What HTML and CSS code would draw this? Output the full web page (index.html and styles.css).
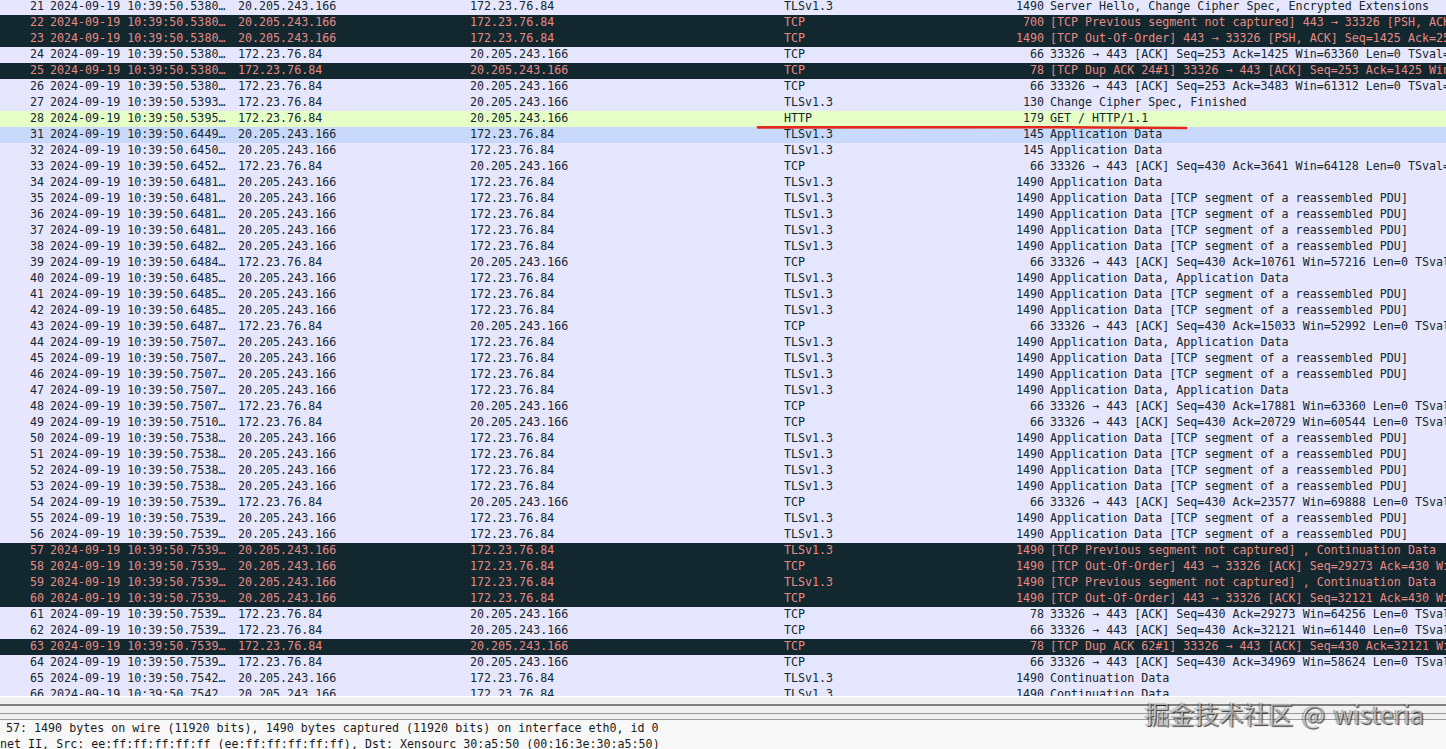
FILE: index.html
```html
<!DOCTYPE html>
<html lang="en">
<head>
<meta charset="utf-8">
<title>Packet capture</title>
<link rel="stylesheet" href="styles.css">
</head>
<body>
<main class="app">
<section class="packets">
<div class="row"><span class="no">21</span><span class="time">2024-09-19 10:39:50.5380…</span><span class="src">20.205.243.166</span><span class="dst">172.23.76.84</span><span class="proto">TLSv1.3</span><span class="len">1490</span><span class="info">Server Hello, Change Cipher Spec, Encrypted Extensions</span></div>
<div class="row bad"><span class="no">22</span><span class="time">2024-09-19 10:39:50.5380…</span><span class="src">20.205.243.166</span><span class="dst">172.23.76.84</span><span class="proto">TCP</span><span class="len">700</span><span class="info">[TCP Previous segment not captured] 443 → 33326 [PSH, ACK] Seq=253</span></div>
<div class="row bad"><span class="no">23</span><span class="time">2024-09-19 10:39:50.5380…</span><span class="src">20.205.243.166</span><span class="dst">172.23.76.84</span><span class="proto">TCP</span><span class="len">1490</span><span class="info">[TCP Out-Of-Order] 443 → 33326 [PSH, ACK] Seq=1425 Ack=253 Win=64</span></div>
<div class="row"><span class="no">24</span><span class="time">2024-09-19 10:39:50.5380…</span><span class="src">172.23.76.84</span><span class="dst">20.205.243.166</span><span class="proto">TCP</span><span class="len">66</span><span class="info">33326 → 443 [ACK] Seq=253 Ack=1425 Win=63360 Len=0 TSval=3</span></div>
<div class="row bad"><span class="no">25</span><span class="time">2024-09-19 10:39:50.5380…</span><span class="src">172.23.76.84</span><span class="dst">20.205.243.166</span><span class="proto">TCP</span><span class="len">78</span><span class="info">[TCP Dup ACK 24#1] 33326 → 443 [ACK] Seq=253 Ack=1425 Win=63360</span></div>
<div class="row"><span class="no">26</span><span class="time">2024-09-19 10:39:50.5380…</span><span class="src">172.23.76.84</span><span class="dst">20.205.243.166</span><span class="proto">TCP</span><span class="len">66</span><span class="info">33326 → 443 [ACK] Seq=253 Ack=3483 Win=61312 Len=0 TSval=3</span></div>
<div class="row"><span class="no">27</span><span class="time">2024-09-19 10:39:50.5393…</span><span class="src">172.23.76.84</span><span class="dst">20.205.243.166</span><span class="proto">TLSv1.3</span><span class="len">130</span><span class="info">Change Cipher Spec, Finished</span></div>
<div class="row http"><span class="no">28</span><span class="time">2024-09-19 10:39:50.5395…</span><span class="src">172.23.76.84</span><span class="dst">20.205.243.166</span><span class="proto">HTTP</span><span class="len">179</span><span class="info">GET / HTTP/1.1</span></div>
<div class="row sel"><span class="no">31</span><span class="time">2024-09-19 10:39:50.6449…</span><span class="src">20.205.243.166</span><span class="dst">172.23.76.84</span><span class="proto">TLSv1.3</span><span class="len">145</span><span class="info">Application Data</span></div>
<div class="row"><span class="no">32</span><span class="time">2024-09-19 10:39:50.6450…</span><span class="src">20.205.243.166</span><span class="dst">172.23.76.84</span><span class="proto">TLSv1.3</span><span class="len">145</span><span class="info">Application Data</span></div>
<div class="row"><span class="no">33</span><span class="time">2024-09-19 10:39:50.6452…</span><span class="src">172.23.76.84</span><span class="dst">20.205.243.166</span><span class="proto">TCP</span><span class="len">66</span><span class="info">33326 → 443 [ACK] Seq=430 Ack=3641 Win=64128 Len=0 TSval=3</span></div>
<div class="row"><span class="no">34</span><span class="time">2024-09-19 10:39:50.6481…</span><span class="src">20.205.243.166</span><span class="dst">172.23.76.84</span><span class="proto">TLSv1.3</span><span class="len">1490</span><span class="info">Application Data</span></div>
<div class="row"><span class="no">35</span><span class="time">2024-09-19 10:39:50.6481…</span><span class="src">20.205.243.166</span><span class="dst">172.23.76.84</span><span class="proto">TLSv1.3</span><span class="len">1490</span><span class="info">Application Data [TCP segment of a reassembled PDU]</span></div>
<div class="row"><span class="no">36</span><span class="time">2024-09-19 10:39:50.6481…</span><span class="src">20.205.243.166</span><span class="dst">172.23.76.84</span><span class="proto">TLSv1.3</span><span class="len">1490</span><span class="info">Application Data [TCP segment of a reassembled PDU]</span></div>
<div class="row"><span class="no">37</span><span class="time">2024-09-19 10:39:50.6481…</span><span class="src">20.205.243.166</span><span class="dst">172.23.76.84</span><span class="proto">TLSv1.3</span><span class="len">1490</span><span class="info">Application Data [TCP segment of a reassembled PDU]</span></div>
<div class="row"><span class="no">38</span><span class="time">2024-09-19 10:39:50.6482…</span><span class="src">20.205.243.166</span><span class="dst">172.23.76.84</span><span class="proto">TLSv1.3</span><span class="len">1490</span><span class="info">Application Data [TCP segment of a reassembled PDU]</span></div>
<div class="row"><span class="no">39</span><span class="time">2024-09-19 10:39:50.6484…</span><span class="src">172.23.76.84</span><span class="dst">20.205.243.166</span><span class="proto">TCP</span><span class="len">66</span><span class="info">33326 → 443 [ACK] Seq=430 Ack=10761 Win=57216 Len=0 TSval=3</span></div>
<div class="row"><span class="no">40</span><span class="time">2024-09-19 10:39:50.6485…</span><span class="src">20.205.243.166</span><span class="dst">172.23.76.84</span><span class="proto">TLSv1.3</span><span class="len">1490</span><span class="info">Application Data, Application Data</span></div>
<div class="row"><span class="no">41</span><span class="time">2024-09-19 10:39:50.6485…</span><span class="src">20.205.243.166</span><span class="dst">172.23.76.84</span><span class="proto">TLSv1.3</span><span class="len">1490</span><span class="info">Application Data [TCP segment of a reassembled PDU]</span></div>
<div class="row"><span class="no">42</span><span class="time">2024-09-19 10:39:50.6485…</span><span class="src">20.205.243.166</span><span class="dst">172.23.76.84</span><span class="proto">TLSv1.3</span><span class="len">1490</span><span class="info">Application Data [TCP segment of a reassembled PDU]</span></div>
<div class="row"><span class="no">43</span><span class="time">2024-09-19 10:39:50.6487…</span><span class="src">172.23.76.84</span><span class="dst">20.205.243.166</span><span class="proto">TCP</span><span class="len">66</span><span class="info">33326 → 443 [ACK] Seq=430 Ack=15033 Win=52992 Len=0 TSval=3</span></div>
<div class="row"><span class="no">44</span><span class="time">2024-09-19 10:39:50.7507…</span><span class="src">20.205.243.166</span><span class="dst">172.23.76.84</span><span class="proto">TLSv1.3</span><span class="len">1490</span><span class="info">Application Data, Application Data</span></div>
<div class="row"><span class="no">45</span><span class="time">2024-09-19 10:39:50.7507…</span><span class="src">20.205.243.166</span><span class="dst">172.23.76.84</span><span class="proto">TLSv1.3</span><span class="len">1490</span><span class="info">Application Data [TCP segment of a reassembled PDU]</span></div>
<div class="row"><span class="no">46</span><span class="time">2024-09-19 10:39:50.7507…</span><span class="src">20.205.243.166</span><span class="dst">172.23.76.84</span><span class="proto">TLSv1.3</span><span class="len">1490</span><span class="info">Application Data [TCP segment of a reassembled PDU]</span></div>
<div class="row"><span class="no">47</span><span class="time">2024-09-19 10:39:50.7507…</span><span class="src">20.205.243.166</span><span class="dst">172.23.76.84</span><span class="proto">TLSv1.3</span><span class="len">1490</span><span class="info">Application Data, Application Data</span></div>
<div class="row"><span class="no">48</span><span class="time">2024-09-19 10:39:50.7507…</span><span class="src">172.23.76.84</span><span class="dst">20.205.243.166</span><span class="proto">TCP</span><span class="len">66</span><span class="info">33326 → 443 [ACK] Seq=430 Ack=17881 Win=63360 Len=0 TSval=3</span></div>
<div class="row"><span class="no">49</span><span class="time">2024-09-19 10:39:50.7510…</span><span class="src">172.23.76.84</span><span class="dst">20.205.243.166</span><span class="proto">TCP</span><span class="len">66</span><span class="info">33326 → 443 [ACK] Seq=430 Ack=20729 Win=60544 Len=0 TSval=3</span></div>
<div class="row"><span class="no">50</span><span class="time">2024-09-19 10:39:50.7538…</span><span class="src">20.205.243.166</span><span class="dst">172.23.76.84</span><span class="proto">TLSv1.3</span><span class="len">1490</span><span class="info">Application Data [TCP segment of a reassembled PDU]</span></div>
<div class="row"><span class="no">51</span><span class="time">2024-09-19 10:39:50.7538…</span><span class="src">20.205.243.166</span><span class="dst">172.23.76.84</span><span class="proto">TLSv1.3</span><span class="len">1490</span><span class="info">Application Data [TCP segment of a reassembled PDU]</span></div>
<div class="row"><span class="no">52</span><span class="time">2024-09-19 10:39:50.7538…</span><span class="src">20.205.243.166</span><span class="dst">172.23.76.84</span><span class="proto">TLSv1.3</span><span class="len">1490</span><span class="info">Application Data [TCP segment of a reassembled PDU]</span></div>
<div class="row"><span class="no">53</span><span class="time">2024-09-19 10:39:50.7538…</span><span class="src">20.205.243.166</span><span class="dst">172.23.76.84</span><span class="proto">TLSv1.3</span><span class="len">1490</span><span class="info">Application Data [TCP segment of a reassembled PDU]</span></div>
<div class="row"><span class="no">54</span><span class="time">2024-09-19 10:39:50.7539…</span><span class="src">172.23.76.84</span><span class="dst">20.205.243.166</span><span class="proto">TCP</span><span class="len">66</span><span class="info">33326 → 443 [ACK] Seq=430 Ack=23577 Win=69888 Len=0 TSval=3</span></div>
<div class="row"><span class="no">55</span><span class="time">2024-09-19 10:39:50.7539…</span><span class="src">20.205.243.166</span><span class="dst">172.23.76.84</span><span class="proto">TLSv1.3</span><span class="len">1490</span><span class="info">Application Data [TCP segment of a reassembled PDU]</span></div>
<div class="row"><span class="no">56</span><span class="time">2024-09-19 10:39:50.7539…</span><span class="src">20.205.243.166</span><span class="dst">172.23.76.84</span><span class="proto">TLSv1.3</span><span class="len">1490</span><span class="info">Application Data [TCP segment of a reassembled PDU]</span></div>
<div class="row bad"><span class="no">57</span><span class="time">2024-09-19 10:39:50.7539…</span><span class="src">20.205.243.166</span><span class="dst">172.23.76.84</span><span class="proto">TLSv1.3</span><span class="len">1490</span><span class="info">[TCP Previous segment not captured] , Continuation Data</span></div>
<div class="row bad"><span class="no">58</span><span class="time">2024-09-19 10:39:50.7539…</span><span class="src">20.205.243.166</span><span class="dst">172.23.76.84</span><span class="proto">TCP</span><span class="len">1490</span><span class="info">[TCP Out-Of-Order] 443 → 33326 [ACK] Seq=29273 Ack=430 Win=64</span></div>
<div class="row bad"><span class="no">59</span><span class="time">2024-09-19 10:39:50.7539…</span><span class="src">20.205.243.166</span><span class="dst">172.23.76.84</span><span class="proto">TLSv1.3</span><span class="len">1490</span><span class="info">[TCP Previous segment not captured] , Continuation Data</span></div>
<div class="row bad"><span class="no">60</span><span class="time">2024-09-19 10:39:50.7539…</span><span class="src">20.205.243.166</span><span class="dst">172.23.76.84</span><span class="proto">TCP</span><span class="len">1490</span><span class="info">[TCP Out-Of-Order] 443 → 33326 [ACK] Seq=32121 Ack=430 Win=64</span></div>
<div class="row"><span class="no">61</span><span class="time">2024-09-19 10:39:50.7539…</span><span class="src">172.23.76.84</span><span class="dst">20.205.243.166</span><span class="proto">TCP</span><span class="len">78</span><span class="info">33326 → 443 [ACK] Seq=430 Ack=29273 Win=64256 Len=0 TSval=3</span></div>
<div class="row"><span class="no">62</span><span class="time">2024-09-19 10:39:50.7539…</span><span class="src">172.23.76.84</span><span class="dst">20.205.243.166</span><span class="proto">TCP</span><span class="len">66</span><span class="info">33326 → 443 [ACK] Seq=430 Ack=32121 Win=61440 Len=0 TSval=3</span></div>
<div class="row bad"><span class="no">63</span><span class="time">2024-09-19 10:39:50.7539…</span><span class="src">172.23.76.84</span><span class="dst">20.205.243.166</span><span class="proto">TCP</span><span class="len">78</span><span class="info">[TCP Dup ACK 62#1] 33326 → 443 [ACK] Seq=430 Ack=32121 Win=64</span></div>
<div class="row"><span class="no">64</span><span class="time">2024-09-19 10:39:50.7539…</span><span class="src">172.23.76.84</span><span class="dst">20.205.243.166</span><span class="proto">TCP</span><span class="len">66</span><span class="info">33326 → 443 [ACK] Seq=430 Ack=34969 Win=58624 Len=0 TSval=3</span></div>
<div class="row"><span class="no">65</span><span class="time">2024-09-19 10:39:50.7542…</span><span class="src">20.205.243.166</span><span class="dst">172.23.76.84</span><span class="proto">TLSv1.3</span><span class="len">1490</span><span class="info">Continuation Data</span></div>
<div class="row"><span class="no">66</span><span class="time">2024-09-19 10:39:50.7542…</span><span class="src">20.205.243.166</span><span class="dst">172.23.76.84</span><span class="proto">TLSv1.3</span><span class="len">1490</span><span class="info">Continuation Data</span></div>
</section>
<div class="splitter"></div>
<section class="details">
<div class="detail first">57: 1490 bytes on wire (11920 bits), 1490 bytes captured (11920 bits) on interface eth0, id 0</div>
<div class="detail">net II, Src: ee:ff:ff:ff:ff:ff (ee:ff:ff:ff:ff:ff), Dst: Xensourc_30:a5:50 (00:16:3e:30:a5:50)</div>
</section>
</main>
<svg class="mark" width="1446" height="749" viewBox="0 0 1446 749" aria-hidden="true">
<path d="M758 127.4 L1060 127.2 L1186 128" fill="none" stroke="#e3291b" stroke-width="2.6" stroke-linecap="round"/>
</svg>
<div class="watermark">掘金技术社区 @ wisteria</div>
</body>
</html>
```

FILE: styles.css
```css
* { box-sizing: border-box; }
html, body { margin: 0; height: 100%; overflow: hidden; }
body { background: #f0f0f0; position: relative; }
.app {
  display: flex;
  flex-direction: column;
  height: 749px;
  font-family: "DejaVu Sans Mono", monospace;
  font-size: 11.67px;
  color: #12272e;
}
.packets {
  height: 697px;
  flex: none;
  overflow: hidden;
  background: #e7e6ff;
  border-bottom: 1px solid #fff;
}
.row {
  display: grid;
  grid-template-columns: 44px 194px 232px 314px 200px 60px 1fr;
  height: 16px;
  line-height: 14px;
  white-space: nowrap;
  background: #e7e6ff;
  transform: translateY(-1px);
}
.row.bad { background: #12272e; color: #e68a86; }
.row.http { background: #e6ffc6; }
.row.sel { background: #c9d9fb; }
.no { text-align: right; }
.time { padding-left: 6px; }
.len { text-align: right; }
.info { padding-left: 6px; overflow: hidden; }
.splitter {
  flex: none;
  height: 16px;
  margin-top: 7px;
  border-top: 2px solid #808080;
  border-bottom: 1px solid #9a9a9a;
  background: linear-gradient(#f0f0f0 7px, #9a9a9a 7px, #9a9a9a 8px, #f0f0f0 8px);
}
.details { flex: 1; overflow: hidden; background: #f8f8f8; color: #1a1a1a; padding-top: 1px; }
.detail { height: 16px; line-height: 14px; white-space: nowrap; }
.detail.first { padding-left: 6px; }
.mark { position: absolute; left: 0; top: 0; pointer-events: none; }
.watermark {
  position: absolute;
  left: 1145px;
  top: 696px;
  font-family: "Noto Sans CJK SC", "Noto Sans", sans-serif;
  font-size: 24.7px;
  line-height: 34px;
  word-spacing: 3px;
  white-space: nowrap;
  color: rgba(255, 255, 255, 0.55);
  text-shadow: 1px 1px 1px rgba(0, 0, 0, 0.75), -1px 0 1px rgba(0, 0, 0, 0.35);
}
```
